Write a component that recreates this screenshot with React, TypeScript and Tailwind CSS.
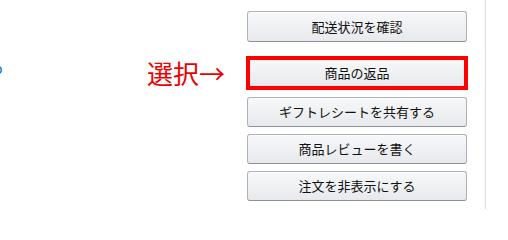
const buttons = ['ギフトレシートを共有する', '商品レビューを書く', '注文を非表示にする'];

const btn =
  'flex items-center justify-center rounded-[3px] border border-[#adb1b8] border-b-[#8d9096] bg-gradient-to-b from-[#f7f8fa] to-[#e7e9ec] text-[13px] text-[#111111] shadow-[inset_0_1px_0_rgba(255,255,255,0.6)]';

export default function App() {
  return (
    <div
      className="flex h-[209px] w-[508px] overflow-hidden bg-white"
      style={{ fontFamily: '"Noto Sans CJK JP", "Noto Sans", sans-serif' }}
    >
      {/* left side: cut-off link + annotation */}
      <div className="flex w-[247px] shrink-0 items-start">
        <span className="ml-[-6px] mt-[58px] text-[14px] leading-[20px] text-[#0066c0]">o</span>
        <span className="ml-auto mr-[22px] mt-[60px] text-[26px] leading-[26px] text-[#ee0000]">
          選択→
        </span>
      </div>

      {/* action buttons */}
      <div className="flex w-[220px] shrink-0 flex-col pt-[11px]">
        <button className={`${btn} h-[31px]`}>配送状況を確認</button>
        <button className="mt-[14px] ml-[-1px] flex h-[34px] w-[222px] items-center justify-center border-4 border-[#ff0000] bg-gradient-to-b from-[#f7f8fa] to-[#e7e9ec] text-[13px] text-[#111111]">
          商品の返品
        </button>
        <div className="mt-[7px] flex flex-col gap-[7px]">
          {buttons.map((label) => (
            <button key={label} className={`${btn} h-[30px]`}>
              {label}
            </button>
          ))}
        </div>
      </div>

      <div className="ml-[18px] h-full border-l border-[#dddddd]" />
    </div>
  );
}
